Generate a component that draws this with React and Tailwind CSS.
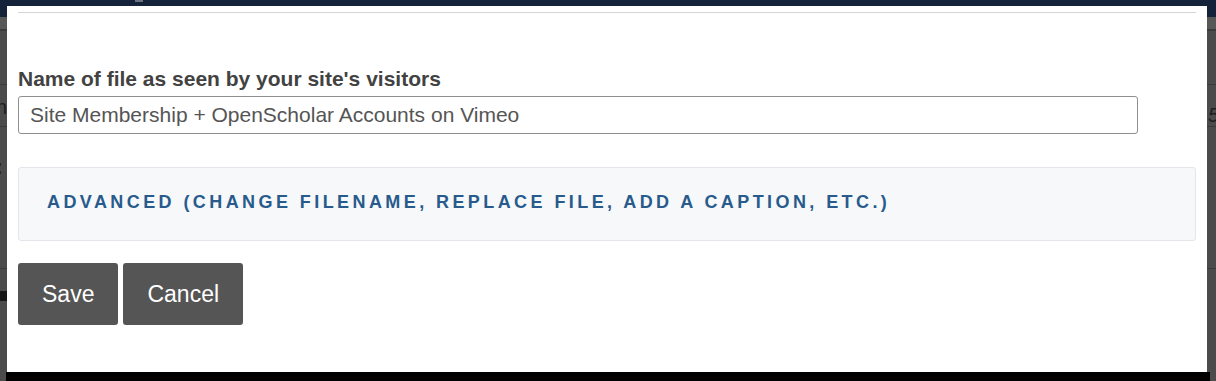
import React from 'react'

export default function App(){
  return (
    <div className="relative w-[1216px] h-[381px] overflow-hidden bg-[#4b4b4b] font-['Liberation_Sans',Arial,sans-serif]">
      {/* page behind the dialog */}
      <div className="flex flex-col">
        <div className="h-[17px] bg-[#15233a]">
          <div className="ml-[135px] w-[8px] h-[2px] bg-[#6b7280]"></div>
        </div>
        <div className="h-[14px] bg-[#585858] border-b-2 border-[#3b3b3b]"></div>
        <div className="h-[54px] border-b border-[#3a3a3a]"></div>
        <div className="h-[42px] flex items-start justify-between border-b border-[#3a3a3a] text-[20px] text-[#1e1e1e]">
          <span className="-ml-[4px] mt-[12px] leading-none">n</span>
          <span className="-mr-[3px] mt-[20px] leading-none italic">5</span>
        </div>
        <div className="h-[80px] flex items-center text-[20px] text-[#1e1e1e]">
          <span className="-ml-[4px] leading-none font-bold">:</span>
        </div>
        <div className="h-[62px] border-b border-[#3a3a3a]"></div>
        <div className="h-[22px]"></div>
        <div className="w-[7px] h-[10px] bg-[#161616]"></div>
      </div>

      {/* dialog */}
      <div className="absolute left-[7px] top-[6px] w-[1200px] h-[366px] bg-white px-[11px] pt-[6px]">
        <div className="border-t border-[#d4d4d4]"></div>
        <form className="mt-[54px]">
          <label className="block text-[21px] leading-[24px] font-bold text-[#424242]">Name of file as seen by your site's visitors</label>
          <input
            defaultValue="Site Membership + OpenScholar Accounts on Vimeo"
            className="mt-[5px] block w-[1120px] h-[38px] rounded-[3px] border border-[#8f8f8f] px-[11px] text-[21px] text-[#555] outline-none"
          />
          <div className="mt-[33px] h-[74px] rounded-[3px] border border-[#e3e6ea] bg-[#f6f8fa] flex items-center px-[28px] pb-[4px]">
            <span className="text-[18px] font-bold tracking-[3.42px] text-[#285b8c] uppercase">Advanced (change filename, replace file, add a caption, etc.)</span>
          </div>
          <div className="mt-[22px] flex gap-[5px]">
            <button type="button" className="h-[62px] px-[24px] rounded-[3px] bg-[#555] text-white text-[23px]">Save</button>
            <button type="button" className="h-[62px] px-[24px] rounded-[3px] bg-[#555] text-white text-[23px]">Cancel</button>
          </div>
        </form>
      </div>

      <div className="absolute left-[6px] top-[372px] w-[1204px] h-[9px] bg-black"></div>
    </div>
  )
}
